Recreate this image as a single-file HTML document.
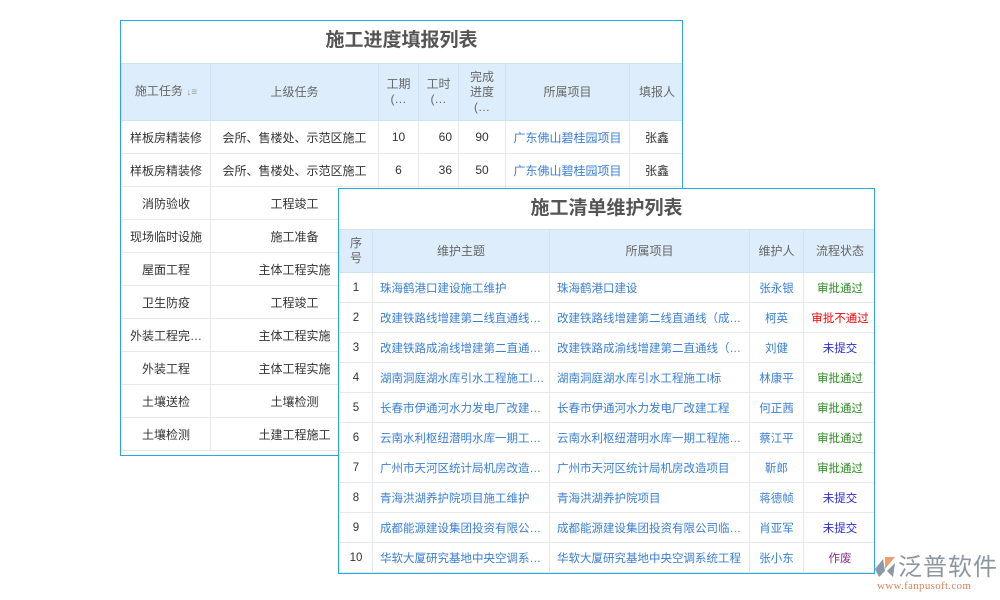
<!DOCTYPE html>
<html><head><meta charset="utf-8"><style>
*{margin:0;padding:0;box-sizing:border-box}
body{width:1000px;height:600px;background:#fff;position:relative;overflow:hidden;font-family:"Liberation Sans","Noto Sans CJK SC",sans-serif;font-size:12px;color:#333}
.box{position:absolute;background:#fff;border:1px solid #2aa6e8;overflow:hidden}
.title{text-align:center;font-weight:bold;color:#555;font-size:19px}
table{border-collapse:collapse;table-layout:fixed;position:absolute;left:0}
td,th{border:1px solid #e6e9ec;text-align:center;white-space:nowrap;overflow:hidden;text-overflow:ellipsis;font-weight:normal;padding:0 2px}
th{background:#deedfb;color:#666;border-color:#cfe2f3;line-height:15px}
.t2 td{font-size:11.5px}
.l{text-align:left;padding-left:7px !important}
.b{color:#3a7fd5}
.g{color:#2e8b22}.r{color:#f00}.p{color:#2a2ad8}.v{color:#8b2d8b}
</style></head><body>

<div class="box" style="left:120px;top:20px;width:563px;height:436px">
<div class="title" style="height:42px;line-height:40px">施工进度填报列表</div>
<table style="top:42px;width:563px">
<colgroup><col style="width:89px"><col style="width:168px"><col style="width:40px"><col style="width:40px"><col style="width:47px"><col style="width:124px"><col style="width:55px"></colgroup>
<tr style="height:57px"><th>施工任务 <span style="color:#999;font-size:10px">↓≡</span></th><th>上级任务</th><th>工期<br>(…</th><th>工时<br>(…</th><th>完成<br>进度<br>(…</th><th>所属项目</th><th>填报人</th></tr>
<tr style="height:33px"><td>样板房精装修</td><td>会所、售楼处、示范区施工</td><td>10</td><td style="text-align:right;padding-right:6px">60</td><td>90</td><td class="b">广东佛山碧桂园项目</td><td>张鑫</td></tr>
<tr style="height:33px"><td>样板房精装修</td><td>会所、售楼处、示范区施工</td><td>6</td><td style="text-align:right;padding-right:6px">36</td><td>50</td><td class="b">广东佛山碧桂园项目</td><td>张鑫</td></tr>
<tr style="height:33px"><td>消防验收</td><td>工程竣工</td><td></td><td></td><td></td><td></td><td></td></tr>
<tr style="height:33px"><td>现场临时设施</td><td>施工准备</td><td></td><td></td><td></td><td></td><td></td></tr>
<tr style="height:33px"><td>屋面工程</td><td>主体工程实施</td><td></td><td></td><td></td><td></td><td></td></tr>
<tr style="height:33px"><td>卫生防疫</td><td>工程竣工</td><td></td><td></td><td></td><td></td><td></td></tr>
<tr style="height:33px"><td>外装工程完…</td><td>主体工程实施</td><td></td><td></td><td></td><td></td><td></td></tr>
<tr style="height:33px"><td>外装工程</td><td>主体工程实施</td><td></td><td></td><td></td><td></td><td></td></tr>
<tr style="height:33px"><td>土壤送检</td><td>土壤检测</td><td></td><td></td><td></td><td></td><td></td></tr>
<tr style="height:33px"><td>土壤检测</td><td>土建工程施工</td><td></td><td></td><td></td><td></td><td></td></tr>
</table>
</div>

<div class="box" style="left:338px;top:188px;width:537px;height:386px">
<div class="title" style="height:40px;line-height:40px">施工清单维护列表</div>
<table class="t2" style="top:40px;width:537px">
<colgroup><col style="width:33px"><col style="width:177px"><col style="width:200px"><col style="width:54px"><col style="width:73px"></colgroup>
<tr style="height:43px"><th>序<br>号</th><th>维护主题</th><th>所属项目</th><th>维护人</th><th>流程状态</th></tr>
<tr style="height:30px"><td>1</td><td class="l b">珠海鹤港口建设施工维护</td><td class="l b">珠海鹤港口建设</td><td class="b">张永银</td><td class="g">审批通过</td></tr>
<tr style="height:30px"><td>2</td><td class="l b">改建铁路线增建第二线直通线（…</td><td class="l b">改建铁路线增建第二线直通线（成都-…</td><td class="b">柯英</td><td class="r">审批不通过</td></tr>
<tr style="height:30px"><td>3</td><td class="l b">改建铁路成渝线增建第二直通线…</td><td class="l b">改建铁路成渝线增建第二直通线（成…</td><td class="b">刘健</td><td class="p">未提交</td></tr>
<tr style="height:30px"><td>4</td><td class="l b">湖南洞庭湖水库引水工程施工I…</td><td class="l b">湖南洞庭湖水库引水工程施工I标</td><td class="b">林康平</td><td class="g">审批通过</td></tr>
<tr style="height:30px"><td>5</td><td class="l b">长春市伊通河水力发电厂改建工…</td><td class="l b">长春市伊通河水力发电厂改建工程</td><td class="b">何正茜</td><td class="g">审批通过</td></tr>
<tr style="height:30px"><td>6</td><td class="l b">云南水利枢纽潜明水库一期工程…</td><td class="l b">云南水利枢纽潜明水库一期工程施工I标</td><td class="b">蔡江平</td><td class="g">审批通过</td></tr>
<tr style="height:30px"><td>7</td><td class="l b">广州市天河区统计局机房改造项…</td><td class="l b">广州市天河区统计局机房改造项目</td><td class="b">靳郎</td><td class="g">审批通过</td></tr>
<tr style="height:30px"><td>8</td><td class="l b">青海洪湖养护院项目施工维护</td><td class="l b">青海洪湖养护院项目</td><td class="b">蒋德帧</td><td class="p">未提交</td></tr>
<tr style="height:30px"><td>9</td><td class="l b">成都能源建设集团投资有限公司…</td><td class="l b">成都能源建设集团投资有限公司临时…</td><td class="b">肖亚军</td><td class="p">未提交</td></tr>
<tr style="height:30px"><td>10</td><td class="l b">华软大厦研究基地中央空调系统…</td><td class="l b">华软大厦研究基地中央空调系统工程</td><td class="b">张小东</td><td class="v">作废</td></tr>
</table>
</div>

<svg style="position:absolute;left:873px;top:555px" width="24" height="24" viewBox="0 0 24 24">
<path d="M12 2 L22 2 L12 14 Z" fill="#e8a070"/><path d="M10 4 L2 14 L6 22 L12 16 Z" fill="#8a98a8"/><path d="M14 16 L22 8 L20 22 Z" fill="#8a98a8"/></svg>
<div style="position:absolute;left:898px;top:551px;font-size:24px;color:#8c96a0;letter-spacing:1px;font-family:'Noto Sans CJK SC',sans-serif;line-height:28px">泛普软件</div>
<div style="position:absolute;left:877px;top:580px;font-size:11px;color:#d8825a;font-family:'Liberation Serif',serif;letter-spacing:0.3px">www.fanpusoft.com</div>
</body></html>
